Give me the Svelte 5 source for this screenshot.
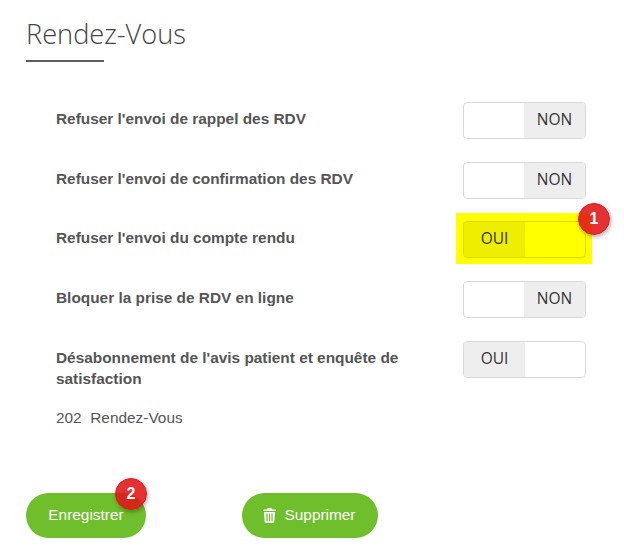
<script lang="ts">
	// Rendez-vous preferences, with the numbered callouts from the help screenshot.
	const rows = [
		{ label: "Refuser l'envoi de rappel des RDV", on: false },
		{ label: "Refuser l'envoi de confirmation des RDV", on: false },
		{ label: "Refuser l'envoi du compte rendu", on: true, marked: true },
		{ label: 'Bloquer la prise de RDV en ligne', on: false },
		{ label: "Désabonnement de l'avis patient et enquête de satisfaction", on: true }
	];
</script>

<main class="page">
	<h1>Rendez-Vous</h1>
	<div class="rule"></div>

	<div class="rows">
		{#each rows as row}
			<div class="row">
				<span class="label">{row.label}</span>
				<div class="toggle-wrap">
					{#if row.marked}
						<div class="mark"></div>
						<span class="badge badge-one">1</span>
					{/if}
					<div class="toggle" class:on={row.on}>
						<span class="side">{row.on ? 'OUI' : 'NON'}</span>
						<span class="blank"></span>
					</div>
				</div>
			</div>
		{/each}
	</div>

	<p class="meta">202&nbsp; Rendez-Vous</p>

	<div class="actions">
		<div class="save-wrap">
			<button class="pill save">Enregistrer</button>
			<span class="badge badge-two">2</span>
		</div>
		<button class="pill delete">
			<svg width="13" height="15" viewBox="0 0 13 15" aria-hidden="true">
				<path fill="currentColor" d="M4.6 0h3.8l.8 1.6h3.1c.4 0 .7.3.7.7v.6H0v-.6c0-.4.3-.7.7-.7h3.1zM1 4h11l-.7 9.8c0 .7-.6 1.2-1.2 1.2H2.9c-.6 0-1.2-.5-1.2-1.2zm2.4 1.6v7.6h1.2V5.6zm2.5 0v7.6h1.2V5.6zm2.5 0v7.6h1.2V5.6z" />
			</svg>
			Supprimer
		</button>
	</div>
</main>

<style>
	:global(body) {
		margin: 0;
		background: #fff;
	}
	.page {
		width: 624px;
		height: 552px;
		box-sizing: border-box;
		padding: 16px 38px 0 26px;
		overflow: hidden;
		font-family: 'Liberation Sans', Arial, sans-serif;
		color: #555;
	}
	h1 {
		margin: 0;
		font-family: 'Open Sans', sans-serif;
		font-weight: 300;
		font-size: 27.2px;
		line-height: 36px;
		color: #444;
	}
	.rule {
		width: 78px;
		height: 2px;
		margin-top: 8px;
		background: #5c5c5c;
	}
	.rows {
		display: flex;
		flex-direction: column;
		gap: 22.7px;
		margin-top: 40px;
		padding-left: 30px;
	}
	.row {
		display: flex;
		justify-content: space-between;
		align-items: flex-start;
		min-height: 37px;
	}
	.label {
		width: 360px;
		padding-top: 6px;
		font-size: 15.4px;
		line-height: 21.5px;
		font-weight: 700;
	}
	.toggle-wrap {
		position: relative;
	}
	.toggle {
		position: relative;
		display: flex;
		width: 123px;
		height: 37px;
		box-sizing: border-box;
		border: 1px solid #d9d9d9;
		border-radius: 4px;
		overflow: hidden;
		font-family: 'Open Sans', sans-serif;
		font-size: 15.5px;
		color: #333;
	}
	.side {
		order: 2;
		flex: 0 0 61px;
		display: flex;
		align-items: center;
		justify-content: center;
		padding-bottom: 3px;
		box-sizing: border-box;
		background: #eee;
	}
	.blank {
		order: 1;
		flex: 1;
	}
	.toggle.on .side {
		order: 0;
	}
	.mark {
		position: absolute;
		inset: -8px -6px -6px -7px;
		background: #ff0;
	}
	.mark + .badge + .toggle {
		background: transparent;
		border-color: #d9d900;
	}
	.mark + .badge + .toggle .side {
		background: #eeee00;
	}
	.badge {
		position: absolute;
		z-index: 2;
		display: flex;
		align-items: center;
		justify-content: center;
		width: 32px;
		height: 32px;
		box-sizing: border-box;
		border: 1px solid #e8141a;
		border-radius: 50%;
		background: rgba(224, 20, 24, 0.88);
		box-shadow: 1px 2px 4px rgba(0, 0, 0, 0.3);
		color: #fff;
		font-size: 16px;
		font-weight: 700;
	}
	.badge-one {
		top: -18px;
		right: -24px;
	}
	.badge-two {
		top: -15px;
		right: -1px;
	}
	.meta {
		margin: 17px 0 0 30px;
		font-size: 15.4px;
		line-height: 21px;
	}
	.actions {
		display: flex;
		gap: 96px;
		margin-top: 65px;
	}
	.save-wrap {
		position: relative;
	}
	.pill {
		display: flex;
		align-items: center;
		justify-content: center;
		gap: 9px;
		height: 45px;
		border: none;
		border-radius: 23px;
		padding: 0;
		background: #6fbe2c;
		color: #fff;
		font-family: inherit;
		font-size: 15.4px;
	}
	.save {
		width: 120px;
	}
	.delete {
		width: 136px;
		padding-right: 2px;
	}
</style>
